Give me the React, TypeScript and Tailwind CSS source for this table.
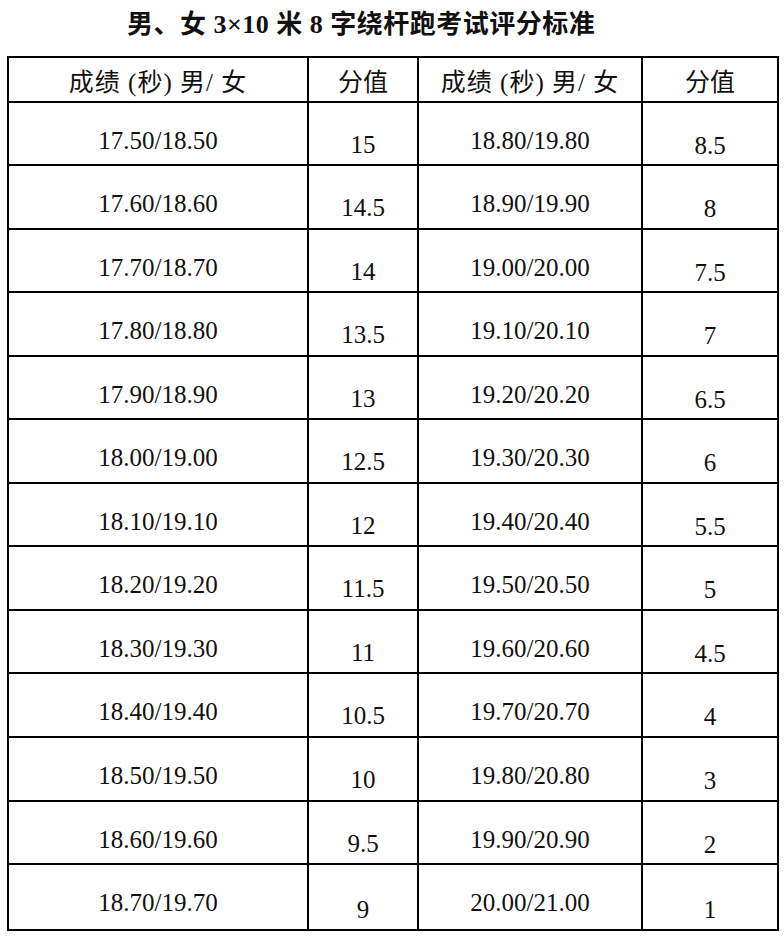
import React from "react";

const left: [string, string][] = [
  ["17.50/18.50", "15"],
  ["17.60/18.60", "14.5"],
  ["17.70/18.70", "14"],
  ["17.80/18.80", "13.5"],
  ["17.90/18.90", "13"],
  ["18.00/19.00", "12.5"],
  ["18.10/19.10", "12"],
  ["18.20/19.20", "11.5"],
  ["18.30/19.30", "11"],
  ["18.40/19.40", "10.5"],
  ["18.50/19.50", "10"],
  ["18.60/19.60", "9.5"],
  ["18.70/19.70", "9"],
];

const right: [string, string][] = [
  ["18.80/19.80", "8.5"],
  ["18.90/19.90", "8"],
  ["19.00/20.00", "7.5"],
  ["19.10/20.10", "7"],
  ["19.20/20.20", "6.5"],
  ["19.30/20.30", "6"],
  ["19.40/20.40", "5.5"],
  ["19.50/20.50", "5"],
  ["19.60/20.60", "4.5"],
  ["19.70/20.70", "4"],
  ["19.80/20.80", "3"],
  ["19.90/20.90", "2"],
  ["20.00/21.00", "1"],
];

const font = { fontFamily: '"Liberation Serif", "Noto Sans CJK SC", serif' };

export default function App() {
  return (
    <div className="w-[784px] h-[936px] bg-white text-[#111]" style={font}>
      <div className="h-[56px] pl-[127px] pt-[12px]">
        <div className="text-[26px] leading-none font-bold tracking-[0.5px] whitespace-pre">
          男、女 3×10 米 8 字绕杆跑考试评分标准
        </div>
      </div>
      <div className="ml-[7px] w-[772px] grid grid-cols-[298px_108px_222px_134px] grid-rows-[43px_61px_62px_61px_62px_61px_62px_61px_62px_61px_62px_62px_61px_64px] gap-[2px] p-[2px] bg-black">
        <div className="bg-white flex justify-center pt-[12px] text-[25px] leading-none whitespace-pre tracking-[1px]">成绩 (秒) 男/ 女</div>
        <div className="bg-white flex justify-center pt-[12px] text-[25px] leading-none">分值</div>
        <div className="bg-white flex justify-center pt-[12px] text-[25px] leading-none whitespace-pre tracking-[1px]">成绩 (秒) 男/ 女</div>
        <div className="bg-white flex justify-center pt-[12px] text-[25px] leading-none">分值</div>
        {left.map((l, i) => {
          const r = right[i];
          const last = i === left.length - 1;
          return (
            <React.Fragment key={i}>
              <div className="bg-white flex justify-center pt-[25px] text-[25px] leading-none">{l[0]}</div>
              <div className={`bg-white flex justify-center ${last ? "pt-[32px]" : "pt-[29px]"} text-[25px] leading-none`}>{l[1]}</div>
              <div className="bg-white flex justify-center pt-[25px] text-[25px] leading-none">{r[0]}</div>
              <div className={`bg-white flex justify-center ${last ? "pt-[32px]" : "pt-[30px]"} text-[25px] leading-none`}>{r[1]}</div>
            </React.Fragment>
          );
        })}
      </div>
    </div>
  );
}
